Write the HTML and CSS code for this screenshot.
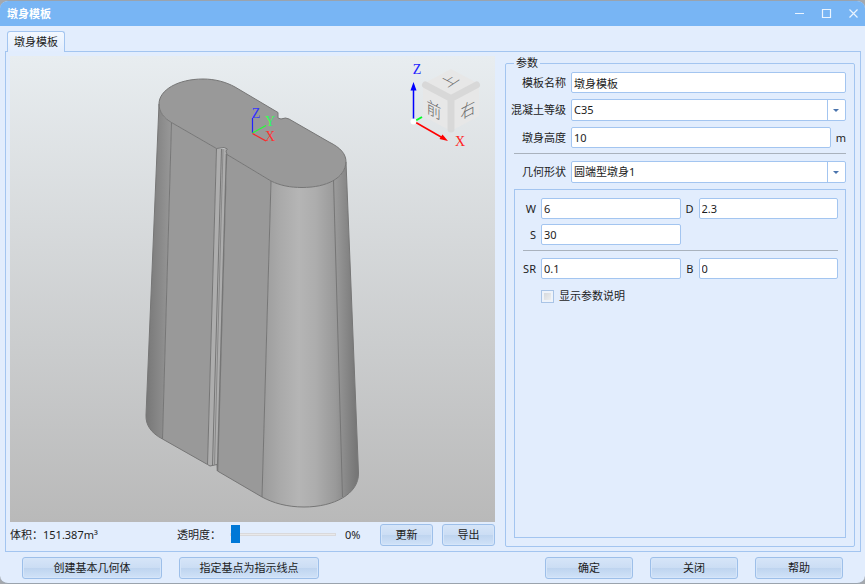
FILE: index.html
```html
<!DOCTYPE html>
<html lang="zh-CN">
<head>
<meta charset="utf-8">
<title>墩身模板</title>
<link rel="stylesheet" href="styles.css">
</head>
<body>
<div class="window">
  <header class="titlebar">
    <h1 class="title">墩身模板</h1>
    <div class="window-controls">
      <button type="button" class="window-button" aria-label="最小化"><svg width="11" height="11" viewBox="0 0 11 11"><path d="M1 5.5h9"/></svg></button>
      <button type="button" class="window-button" aria-label="最大化"><svg width="11" height="11" viewBox="0 0 11 11"><path d="M1.5 1.5h8v8h-8z"/></svg></button>
      <button type="button" class="window-button" aria-label="关闭窗口"><svg width="11" height="11" viewBox="0 0 11 11"><path d="M1.5 1.5l8 8M9.5 1.5l-8 8"/></svg></button>
    </div>
  </header>

  <nav class="tabs"><button type="button" class="tab">墩身模板</button></nav>

  <main class="pane">
    <section class="preview">
      <div class="viewport">
        <svg class="scene" viewBox="10 56 485 466">
          <defs>
            <linearGradient id="leftRound" x1="0" x2="1" y1="0" y2="0">
              <stop offset="0" stop-color="#777"/><stop offset="1" stop-color="#989898"/>
            </linearGradient>
            <linearGradient id="rightRound" gradientUnits="userSpaceOnUse" x1="264" x2="356" y1="0" y2="0">
              <stop offset="0" stop-color="#9d9d9d"/><stop offset=".18" stop-color="#aaa"/><stop offset=".38" stop-color="#b5b5b5"/><stop offset=".56" stop-color="#adadad"/><stop offset=".78" stop-color="#999"/><stop offset="1" stop-color="#777"/>
            </linearGradient>
          </defs>
          <g stroke-linejoin="round">
            <path fill="url(#leftRound)" d="M159 104C159 112 164 118 171.500 122.500L162.500 439C151 433 145.500 425 146 415z"/>
            <path fill="#999" d="M171.500 122.500L216.500 148.500L207.500 464.500L162.500 439z"/>
            <path fill="#adadad" d="M216.500 148.500H227L217.500 471L217 464.500L210 466L207.500 464.500z"/>
            <path fill="#999" d="M227 154.500L271 181L262 497L217.500 471z"/>
            <path fill="url(#rightRound)" d="M271 181C280 185.500 290 187.500 302 187.500C327 187.500 345 178 346 162L358.500 473C359 494 334 507 304 507C287 507 273 503 262 497z"/>
            <path fill="#999" d="M159 104C159 90 178 79 203 79C215 79 226 82 235 87L278 112.500V118L281 119Q286 117 289 119L329 142C341 148 346 154 346 162C345 178 327 187.500 302 187.500C290 187.500 280 185.500 271 181L227 154.500L226 151L227.500 149L224 147.500L216.500 148.500L171.500 122.500C164 118 159 112 159 104z"/>
          </g>
          <g fill="none" stroke="#767676" stroke-width="1" stroke-linejoin="round">
            <path d="M159 104C159 90 178 79 203 79C215 79 226 82 235 87L278 112.500V118L281 119Q286 117 289 119L329 142C341 148 346 154 346 162C345 178 327 187.500 302 187.500C290 187.500 280 185.500 271 181L227 154.500L226 151L227.500 149L224 147.500L216.500 148.500L171.500 122.500C164 118 159 112 159 104L146 415C145.500 425 151 433 162.500 439L207.500 464.500L210 466L217 464.500L217.500 471L262 497C273 503 287 507 304 507C334 507 359 494 358.500 473L346 162"/>
            <path d="M171.500 122.500L162.500 439M216.500 148.500L207.500 464.500M221.500 149L212.500 465M271 181L262 497M333.500 180L342.500 497"/>
            <path d="M226.500 154L217.500 471" stroke-width="1.500"/>
            <path d="M223 149L214.500 465" stroke="#888"/>
          </g>

          <g fill="none" stroke-width="1.200">
            <path stroke="#22f" d="M252.500 133V118"/>
            <path stroke="#2f3" d="M252.500 133L266 125.500"/>
            <path stroke="#f22" d="M252.500 133.500L266 141"/>
          </g>
          <g class="axis-name" text-anchor="middle">
            <text x="256" y="118" fill="#33f">Z</text>
            <text x="270" y="126" fill="#3f5">Y</text>
            <text x="270" y="141" fill="#f33">X</text>
          </g>

          <g>
            <path fill="#e7e7e7" d="M451 69L479 84V116L451 131L423 116V84z"/>
            <path fill="none" stroke="#d8d8d8" stroke-width="7" stroke-linecap="round" stroke-linejoin="round" d="M425.500 85L451 98.500L476.500 85M451 98.500V129"/>
            <g class="face-name" text-anchor="middle">
              <text transform="matrix(.75 -.5 .75 .4 449 81)" y="6">上</text>
              <text transform="matrix(.87 .45 0 1 434 110)" y="6">前</text>
              <text transform="matrix(.87 -.45 0 1 468 110)" y="6">右</text>
            </g>
          </g>
          <path d="M413.500 121V89" stroke="#00f" stroke-width="1.500"/>
          <path d="M413.500 82L416.500 90.500H410.500z" fill="#00f"/>
          <path d="M415 121L422 117" stroke="#0f2" stroke-width="2"/>
          <path d="M415 122L442 137.500" stroke="#f00" stroke-width="1.500"/>
          <path d="M448 141L439.500 139L442.500 134.500z" fill="#f00"/>
          <circle cx="413.500" cy="121.500" r="3" fill="#fff"/>
          <g class="axis-name" text-anchor="middle">
            <text x="417" y="74" fill="#22f">Z</text>
            <text x="460" y="146" fill="#f22">X</text>
          </g>
        </svg>
      </div>
      <div class="status">
        <span class="volume">体积：151.387m³</span>
        <label for="opacity">透明度：</label>
        <input class="slider" id="opacity" type="range" min="0" max="100" value="0">
        <output class="percent" for="opacity">0%</output>
        <button type="button" class="button button-small">更新</button>
        <button type="button" class="button button-small">导出</button>
      </div>
    </section>

    <fieldset class="parameters">
      <legend>参数</legend>
      <div class="form">
        <label for="name">模板名称</label>
        <input class="field" id="name" type="text" value="墩身模板">
        <label for="grade">混凝土等级</label>
        <span class="combo"><select class="field" id="grade"><option>C35</option></select></span>
        <label for="height">墩身高度</label>
        <span class="with-unit"><input class="field" id="height" type="text" value="10"><span>m</span></span>
      </div>
      <hr class="rule">
      <div class="form">
        <label for="shape">几何形状</label>
        <span class="combo"><select class="field" id="shape"><option>圆端型墩身1</option></select></span>
      </div>
      <div class="shape-box">
        <div class="dimensions">
          <label for="w">W</label><input class="field" id="w" type="text" value="6">
          <label for="d">D</label><input class="field" id="d" type="text" value="2.3">
          <label for="s">S</label><input class="field" id="s" type="text" value="30">
        </div>
        <hr class="rule">
        <div class="dimensions">
          <label for="sr">SR</label><input class="field" id="sr" type="text" value="0.1">
          <label for="b">B</label><input class="field" id="b" type="text" value="0">
          <label class="check"><input type="checkbox">显示参数说明</label>
        </div>
      </div>
    </fieldset>
  </main>

  <footer class="actions">
    <button type="button" class="button button-wide">创建基本几何体</button>
    <button type="button" class="button button-wide">指定基点为指示线点</button>
    <span class="spacer"></span>
    <button type="button" class="button">确定</button>
    <button type="button" class="button">关闭</button>
    <button type="button" class="button">帮助</button>
  </footer>
</div>
</body>
</html>
```
FILE: styles.css
```css
* { box-sizing: border-box; }

body {
  margin: 0;
  background: #a4a8ad;
  color: #1c1c1c;
  font: 11px/16px "Noto Sans", "Noto Sans CJK SC", sans-serif;
}

button, input, select { margin: 0; color: inherit; font: inherit; }

.window {
  display: flex;
  flex-direction: column;
  height: 100vh;
  border: solid #9aa3ad;
  border-width: 1px 0;
  border-radius: 8px;
  background: #e2edfd;
  overflow: hidden;
}

.titlebar {
  display: flex;
  flex: none;
  align-items: center;
  justify-content: space-between;
  height: 25px;
  padding: 0 2px 0 7px;
  background: #78b5f4;
}
.title { margin: 0; color: #fff; font-size: 11px; font-weight: 700; }
.window-controls { display: flex; gap: 7px; }
.window-button {
  display: grid;
  place-items: center;
  width: 20px;
  height: 20px;
  padding: 0;
  border: 0;
  background: none;
}
.window-button path { fill: none; stroke: #eaf4ff; stroke-width: 1.2; }

.tabs { display: flex; flex: none; padding: 5px 7px 0; }
.tab {
  position: relative;
  height: 21px;
  margin-bottom: -1px;
  padding: 0 6px;
  border: 1px solid #a3c5f0;
  border-bottom: 0;
  border-radius: 3px 3px 0 0;
  background: linear-gradient(#f3f8ff, #e2edfd);
}

.pane {
  display: grid;
  flex: 1;
  grid-template-columns: minmax(0, 1fr) 350px;
  gap: 10px;
  min-height: 0;
  margin: 0 4px 0 5px;
  padding: 3px 5px 4px 4px;
  border: 1px solid #a3c5f0;
}

.preview { display: flex; flex-direction: column; min-height: 0; }
.viewport {
  flex: 1;
  min-height: 0;
  margin-top: 1px;
  background: linear-gradient(#e8edf0, #b9b9b9);
}
.scene { display: block; width: 100%; height: 100%; }
.axis-name { font: 14px "Liberation Serif", serif; }
.face-name { fill: #666; font: 300 17px "Noto Sans CJK SC", sans-serif; }

.status { display: flex; flex: none; align-items: center; gap: 9px; height: 25px; }
.volume { flex: 1; }
.percent { width: 26px; }
.slider { width: 106px; height: 18px; appearance: none; background: none; }
.slider::-webkit-slider-runnable-track {
  height: 3px;
  border: 1px solid #d9d9dc;
  background: #e9e9ea;
}
.slider::-webkit-slider-thumb {
  width: 9px;
  height: 18px;
  margin-top: -9px;
  appearance: none;
  background: #0078d7;
}

.button {
  width: 88px;
  height: 22px;
  padding: 0;
  border: 1px solid #9dbfe9;
  border-radius: 3px;
  background: linear-gradient(#d6e5f8, #cbddf4 50%, #bed4ef 50%, #d0e2f8);
  box-shadow: inset 0 0 0 1px #d5e5f9;
}
.button-small { width: 53px; }
.button-wide { width: 140px; }

.parameters {
  display: flex;
  flex-direction: column;
  min-width: 0;
  min-height: 0;
  margin: 0;
  padding: 1px 8px 8px;
  border: 1px solid #a3c5f0;
  border-radius: 2px;
}
.parameters legend { padding: 0 2px; }

.form {
  display: grid;
  grid-template-columns: 52px minmax(0, 1fr);
  gap: 6px 5px;
  align-items: center;
}
.form label { justify-self: end; white-space: nowrap; }

.field {
  width: 100%;
  min-width: 0;
  height: 21px;
  padding: 0 2px;
  border: 1px solid #a3c5f0;
  border-radius: 2px;
  background: #fff;
  outline: 0;
}
select.field { height: 22px; appearance: none; }
.combo { display: grid; position: relative; }
.combo::before {
  position: absolute;
  top: 1px;
  right: 18px;
  bottom: 1px;
  width: 1px;
  background: #a3c5f0;
  content: "";
}
.combo::after {
  position: absolute;
  top: 10px;
  right: 7px;
  border: solid transparent;
  border-width: 3px 3px 0;
  border-top-color: #4a74ad;
  content: "";
}
.with-unit { display: flex; align-items: center; gap: 5px; }

.rule {
  width: 100%;
  height: 1px;
  margin: 5px 0 7px;
  border: 0;
  background: #a9b2bd;
}

.shape-box {
  flex: 1;
  margin-top: 6px;
  padding: 8px 7px 8px 8px;
  border: 1px solid #a3c5f0;
}
.dimensions {
  display: grid;
  grid-template-columns: 13px minmax(0, 1fr) 8px minmax(0, 1fr);
  gap: 5px;
  align-items: center;
}
.dimensions label { justify-self: end; }
.dimensions .check {
  display: flex;
  grid-column: 2 / -1;
  justify-self: start;
  align-items: center;
  gap: 5px;
  margin-top: 4px;
}
.check input {
  width: 13px;
  height: 13px;
  appearance: none;
  border: 1px solid #a9c4e6;
  background: linear-gradient(135deg, #cfd3d8, #f4f4f4);
  box-shadow: inset 0 0 0 2px #eef3fa;
}

.actions { display: flex; flex: none; gap: 17px; padding: 5px 22px 4px; }
.spacer { flex: 1; }
```
